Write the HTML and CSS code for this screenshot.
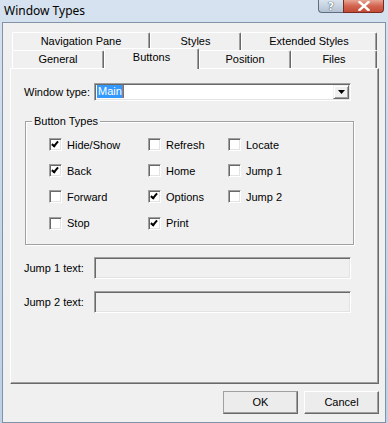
FILE: index.html
```html
<!DOCTYPE html>
<html lang="en">
<head>
  <meta charset="UTF-8">
  <title>Window Types</title>
  <link rel="stylesheet" href="styles.css">
</head>
<body>
  <div class="window">
    <div class="titlebar">
      <span class="title">Window Types</span>
      <div class="caption-btns">
        <span class="cap cap-help">?</span>
        <span class="cap cap-close">
          <svg width="12" height="10" viewBox="0 0 12 10"><path d="M1.5 1 L10.5 9 M10.5 1 L1.5 9" stroke="#fff" stroke-width="2.4" stroke-linecap="square"/></svg>
        </span>
      </div>
    </div>

    <div class="client">
      <div class="tabs">
        <div class="tab-row">
          <div class="tab tab-nav">Navigation Pane</div>
          <div class="tab tab-styles">Styles</div>
          <div class="tab tab-ext">Extended Styles</div>
        </div>
        <div class="tab-row">
          <div class="tab tab-general">General</div>
          <div class="tab tab-buttons active">Buttons</div>
          <div class="tab tab-position">Position</div>
          <div class="tab tab-files">Files</div>
        </div>
      </div>

      <div class="panel">
        <div class="field-row">
          <label class="field-label">Window type:</label>
          <div class="combo">
            <span class="combo-text"><span class="sel">Main</span><span class="caret"></span></span>
            <span class="combo-btn">
              <svg width="7" height="4" viewBox="0 0 7 4"><path d="M0 0 H7 L3.5 4 Z" fill="#000"/></svg>
            </span>
          </div>
        </div>

        <div class="group">
          <span class="group-title">Button Types</span>
          <div class="check-grid">
            <div class="check"><span class="box checked"></span>Hide/Show</div>
            <div class="check"><span class="box"></span>Refresh</div>
            <div class="check"><span class="box"></span>Locate</div>

            <div class="check"><span class="box checked"></span>Back</div>
            <div class="check"><span class="box"></span>Home</div>
            <div class="check"><span class="box"></span>Jump 1</div>

            <div class="check"><span class="box"></span>Forward</div>
            <div class="check"><span class="box checked"></span>Options</div>
            <div class="check"><span class="box"></span>Jump 2</div>

            <div class="check"><span class="box"></span>Stop</div>
            <div class="check"><span class="box checked"></span>Print</div>
            <div class="check"></div>
          </div>
        </div>

        <div class="field-row jump-row">
          <label class="field-label">Jump 1 text:</label>
          <div class="textbox"></div>
        </div>
        <div class="field-row jump-row second">
          <label class="field-label">Jump 2 text:</label>
          <div class="textbox"></div>
        </div>
      </div>

      <div class="actions">
        <button class="btn default">OK</button>
        <button class="btn">Cancel</button>
      </div>
    </div>
  </div>
</body>
</html>
```

FILE: styles.css
```css
/* Dialog frame */
body {
  margin: 0;
  font-family: "Liberation Sans", Arial, sans-serif;
  font-size: 11px;
  color: #000;
  background: #c4d6ea;
}

.window {
  width: 388px;
  height: 423px;
  display: flex;
  flex-direction: column;
  background: linear-gradient(180deg, #d6e2ef 0%, #c3d5e9 60%, #bdd1e7 100%);
}

.titlebar {
  height: 22px;
  display: flex;
  align-items: flex-start;
  justify-content: space-between;
  position: relative;
}

.title {
  font-family: "Noto Sans", sans-serif;
  font-size: 12px;
  line-height: 12px;
  margin: 5px 0 0 4px;
  color: #000;
}

.caption-btns {
  display: flex;
  margin-right: 4px;
}

.cap {
  height: 13px;
  display: flex;
  align-items: center;
  justify-content: center;
  box-sizing: border-box;
  border: 1px solid #5f6d7e;
  border-top: none;
}

.cap-help {
  width: 25px;
  border-radius: 0 0 0 4px;
  background: linear-gradient(180deg, #d9e3ee 0%, #b3c2d3 100%);
  border-right: none;
  font-family: "DejaVu Sans", sans-serif;
  font-size: 11px;
  font-weight: bold;
  color: #fff;
  text-shadow: 0 0 1px #3d4a5a, 0 0 1px #3d4a5a;
}

.cap-close {
  width: 41px;
  border-radius: 0 0 4px 0;
  background: linear-gradient(180deg, #e8a594 0%, #d2644f 50%, #c24b37 100%);
  border-color: #7a2a20;
}

.client {
  margin: 0 2px;
  height: 396px;
  border: 1px solid #8293a7;
  background: #f0f0f0;
  padding-top: 9px;
  box-sizing: content-box;
}

/* Tabs */
.tabs {
  margin-left: 9px;
  width: 365px;
}

.tab-row {
  display: flex;
  height: 18px;
  align-items: flex-end;
}

.tab {
  box-sizing: border-box;
  height: 18px;
  border-top: 1px solid #fff;
  border-left: 1px solid #fff;
  border-right: 1px solid #696969;
  box-shadow: inset -1px 0 #a0a0a0;
  border-radius: 2px 2px 0 0;
  background: #f0f0f0;
  text-align: center;
  line-height: 17px;
}

.tab.active {
  height: 21px;
  margin-bottom: -1px;
  position: relative;
  z-index: 1;
  line-height: 17px;
}

.tab-nav { width: 138px; }
.tab-styles { width: 91px; }
.tab-ext { width: 136px; }
.tab-general { width: 92px; }
.tab-buttons { width: 95px; }
.tab-position { width: 92px; }
.tab-files { width: 86px; }

.panel {
  margin-left: 7px;
  width: 369px;
  height: 316px;
  box-sizing: border-box;
  border-top: 1px solid #fff;
  border-left: 1px solid #fff;
  border-right: 1px solid #696969;
  border-bottom: 1px solid #696969;
  box-shadow: inset -1px -1px #a0a0a0;
  padding: 14px 0 0 13px;
}

/* Fields */
.field-row {
  display: flex;
  align-items: center;
}

.field-label {
  width: 70px;
  flex: none;
}

.combo {
  width: 257px;
  height: 18px;
  box-sizing: border-box;
  border: 1px solid;
  border-color: #a0a0a0 #fff #fff #a0a0a0;
  box-shadow: inset 1px 1px #696969, inset -1px -1px #e3e3e3;
  background: #fff;
  display: flex;
  align-items: center;
  justify-content: space-between;
  padding: 1px 1px 1px 2px;
}

.combo-text {
  display: flex;
  align-items: center;
  height: 13px;
}

.sel {
  background: #3399ff;
  color: #fff;
  line-height: 13px;
  padding: 0 1px;
}

.caret {
  width: 1px;
  height: 13px;
  background: #c95e10;
}

.combo-btn {
  width: 16px;
  height: 14px;
  box-sizing: border-box;
  border: 1px solid;
  border-color: #f0f0f0 #696969 #696969 #f0f0f0;
  box-shadow: inset 1px 1px #fff, inset -1px -1px #a0a0a0;
  background: #f0f0f0;
  display: flex;
  align-items: center;
  justify-content: center;
}

/* Group box */
.group {
  position: relative;
  margin: 20px 0 0 1px;
  width: 329px;
  height: 124px;
  box-sizing: border-box;
  border: 1px solid #a0a0a0;
  box-shadow: inset 1px 1px #fff, 1px 1px #fff;
  padding: 10px 0 0 23px;
}

.group-title {
  position: absolute;
  top: -7px;
  left: 6px;
  padding: 0 2px;
  background: #f0f0f0;
  line-height: 13px;
}

.check-grid {
  display: grid;
  grid-template-columns: 99px 80px 1fr;
  grid-template-rows: 26px 26px 26px 27px;
}

.check {
  display: flex;
  align-items: center;
}

.box {
  width: 13px;
  height: 13px;
  box-sizing: border-box;
  margin-right: 5px;
  border: 1px solid;
  border-color: #a0a0a0 #fff #fff #a0a0a0;
  box-shadow: inset 1px 1px #696969, inset -1px -1px #e3e3e3;
  background: #fff;
  position: relative;
}

.box.checked::after {
  content: "";
  position: absolute;
  left: 3px;
  top: 1px;
  width: 2px;
  height: 5px;
  border: solid #000;
  border-width: 0 2px 2px 0;
  transform: rotate(40deg);
  transform-origin: center;
}

.jump-row {
  margin-top: 12px;
}

.jump-row.second {
  margin-top: 12px;
}

.textbox {
  width: 257px;
  height: 22px;
  box-sizing: border-box;
  border: 1px solid;
  border-color: #a0a0a0 #fff #fff #a0a0a0;
  box-shadow: inset 1px 1px #696969, inset -1px -1px #e3e3e3;
  background: #f0f0f0;
}

/* Buttons */
.actions {
  display: flex;
  justify-content: flex-end;
  gap: 6px;
  margin: 7px 6px 0 0;
}

.btn {
  width: 75px;
  height: 23px;
  font-family: "Liberation Sans", Arial, sans-serif;
  font-size: 11px;
  color: #000;
  background: #ececec;
  border: 1px solid;
  border-color: #fff #696969 #696969 #fff;
  box-shadow: inset -1px -1px #a0a0a0;
  padding: 0;
}

.btn.default {
  border-color: #a0a0a0 #696969 #696969 #a0a0a0;
}
```
